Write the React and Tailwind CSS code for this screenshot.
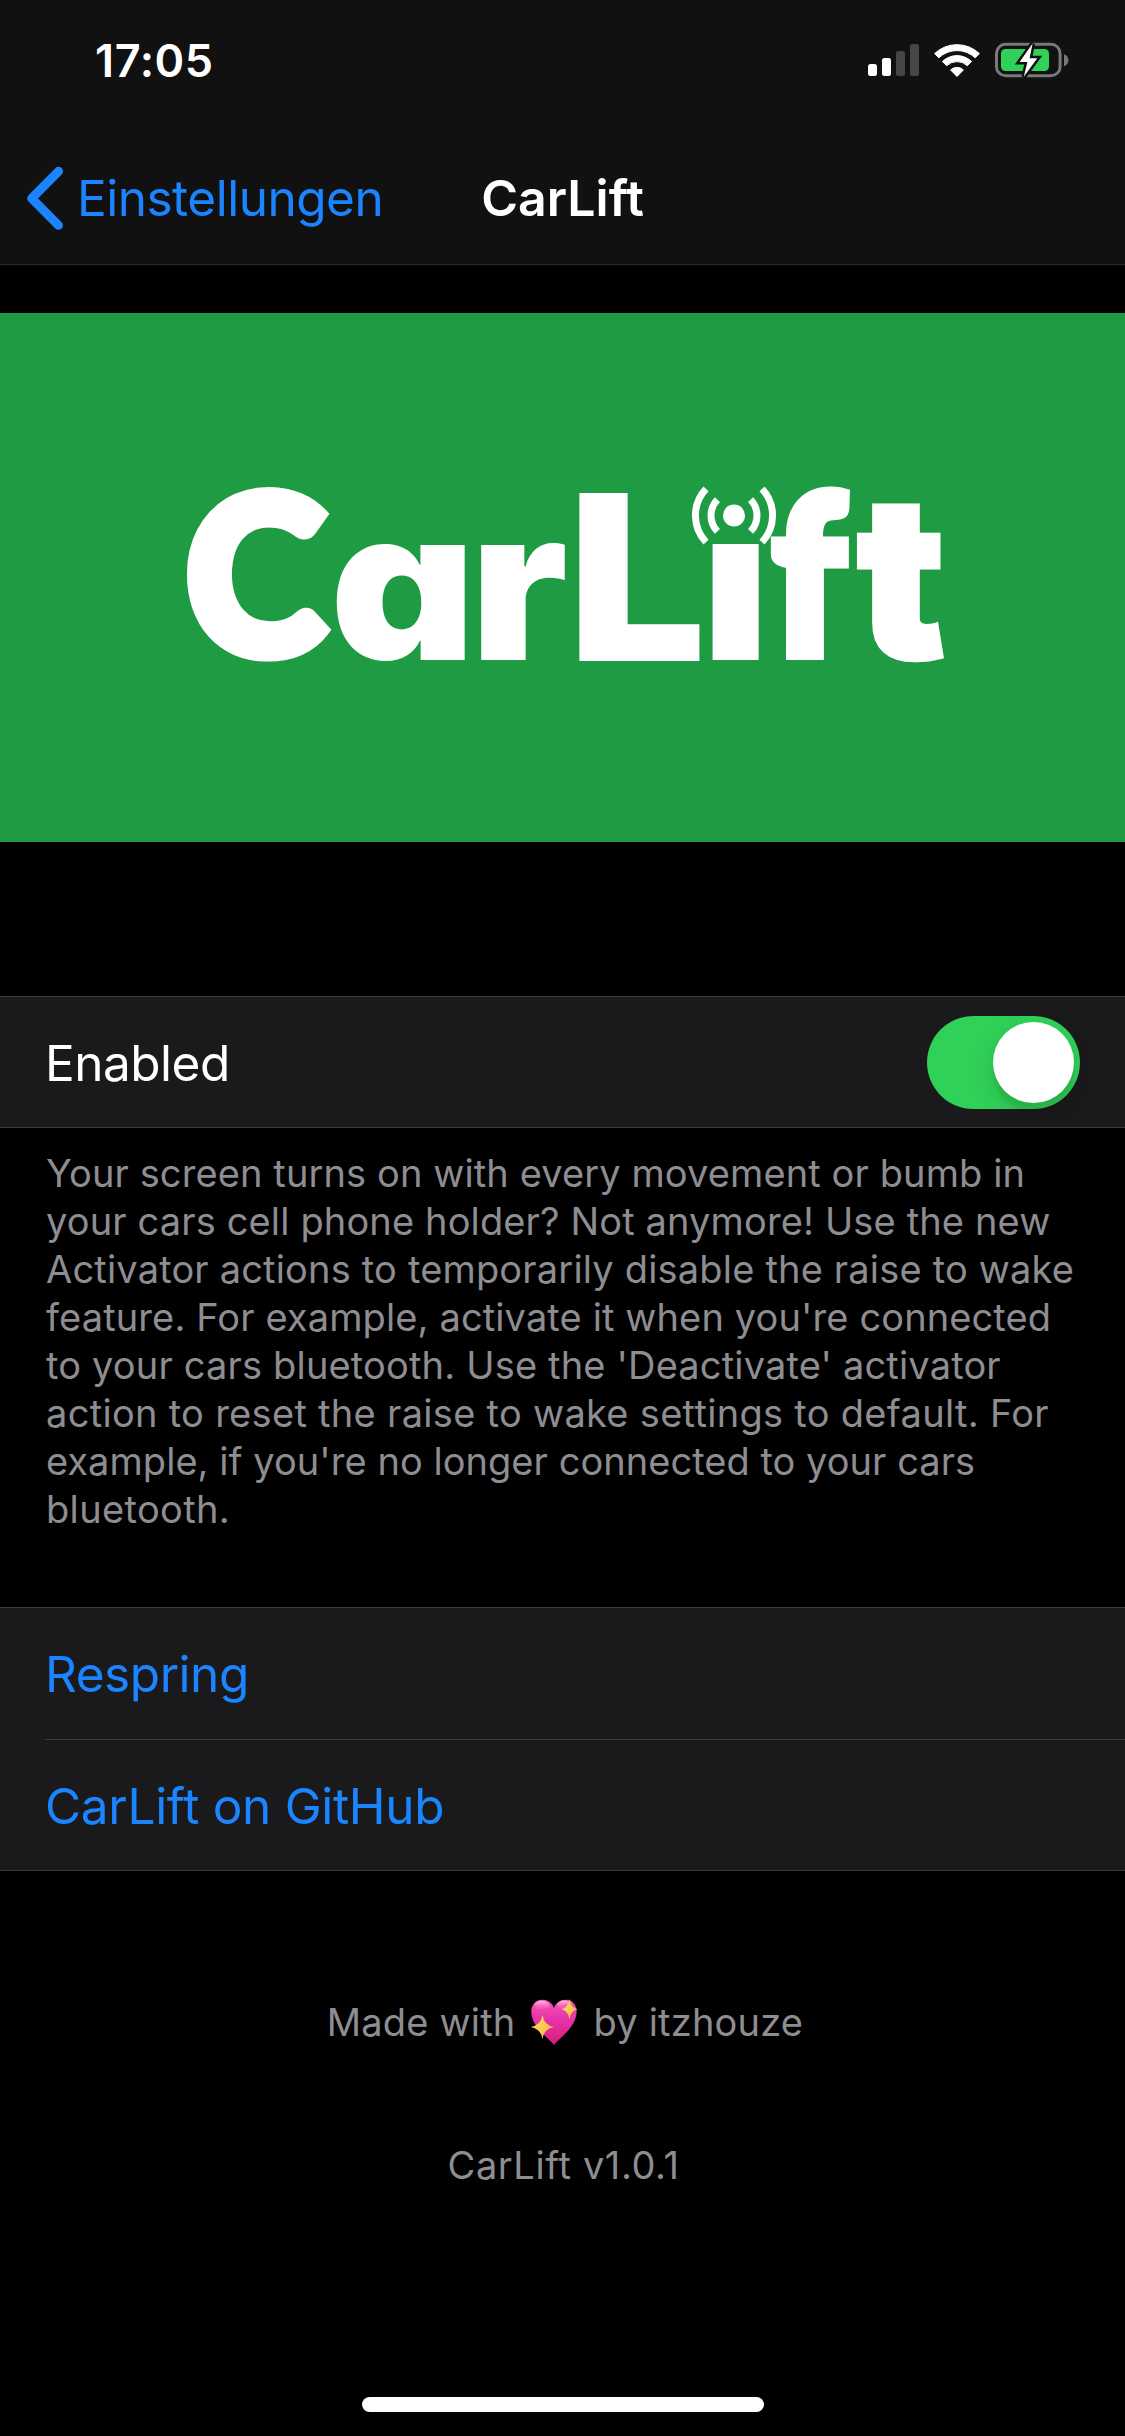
import React from "react";

function SignalIcon() {
  return (
    <svg width="51" height="32" viewBox="0 0 51 32">
      <rect x="0" y="20" width="9" height="12" rx="2.5" fill="#fff" />
      <rect x="14" y="14" width="9" height="18" rx="2.5" fill="#fff" />
      <rect x="28" y="7" width="9" height="25" rx="2.5" fill="#464647" />
      <rect x="42" y="0" width="9" height="32" rx="2.5" fill="#464647" />
    </svg>
  );
}

function WifiIcon() {
  return (
    <svg width="46" height="34" viewBox="-23 -33.5 46 34" fill="#fff" stroke="#fff" strokeWidth="1" strokeLinejoin="round">
      <path d="M-22.4 -22.9 A32.5 32.5 0 0 1 22.4 -22.9 L18.2 -18.7 A26.5 26.5 0 0 0 -18.2 -18.7 Z" />
      <path d="M-14.6 -15 A21 21 0 0 1 14.6 -15 L10.3 -10.8 A15 15 0 0 0 -10.3 -10.8 Z" />
      <path d="M-6.4 -6.6 A9.3 9.3 0 0 1 6.4 -6.6 L0 0 Z" />
    </svg>
  );
}

function BatteryIcon() {
  return (
    <svg width="74" height="36" viewBox="0 0 74 36">
      <rect x="1.5" y="2.3" width="63.6" height="31.4" rx="9" fill="none" stroke="#79797c" strokeWidth="3" />
      <path d="M69 12.2 C72.2 13.4 73.4 15.8 73.4 18.2 C73.4 20.6 72.2 23 69 24.2 Z" fill="#79797c" />
      <rect x="6" y="7" width="48" height="22" rx="4.5" fill="#30d158" />
      <path
        d="M37.6 1.6 L24.6 20 H32.4 L28.8 34.8 L42.3 16.3 H34.6 Z"
        fill="#fff"
        stroke="#111"
        strokeWidth="5"
        strokeLinejoin="miter"
        paintOrder="stroke"
      />
    </svg>
  );
}

function SparklingHeart() {
  return (
    <svg role="img" aria-label="💖" width="48" height="47" viewBox="0 0 48 47" className="shrink-0">
      <defs>
        <linearGradient id="heart" x1="0" y1="0" x2="0" y2="1">
          <stop offset="0" stopColor="#f654b4" />
          <stop offset="0.4" stopColor="#e834ac" />
          <stop offset="1" stopColor="#d81c78" />
        </linearGradient>
        <linearGradient id="spark" x1="0" y1="0" x2="1" y2="1">
          <stop offset="0" stopColor="#ffe873" />
          <stop offset="1" stopColor="#f7a935" />
        </linearGradient>
        <linearGradient id="shine" x1="0" y1="0" x2="0" y2="1">
          <stop offset="0" stopColor="#ffc4e6" stopOpacity="0.9" />
          <stop offset="1" stopColor="#ff7cc6" stopOpacity="0" />
        </linearGradient>
      </defs>
      <path
        d="M24 46 C20 40 1.3 28.5 1.3 12.5 C1.3 5.5 6 0.8 12.2 0.8 C18 0.8 22.2 4 24 9 C25.8 4 30 0.8 35.8 0.8 C42 0.8 46.6 5.5 46.6 12.5 C46.6 28.5 28 40 24 46 Z"
        fill="url(#heart)"
      />
      <ellipse cx="11.8" cy="6.6" rx="7.4" ry="4.8" fill="url(#shine)" />
      <ellipse cx="34" cy="6" rx="7" ry="4.4" fill="url(#shine)" />
      <path d="M12.5 16 Q13.8 26.2 24 28 Q13.8 29.8 12.5 40 Q11 29.8 0.6 28 Q11 26.2 12.5 16 Z" fill="url(#spark)" />
      <path d="M39.5 0 Q40.5 8.6 47.5 10.3 Q40.5 12 39.5 20.6 Q38.2 12 31.6 10.3 Q38.2 8.6 39.5 0 Z" fill="url(#spark)" />
    </svg>
  );
}

function Banner() {
  return (
    <svg
      viewBox="0 313 1125 529"
      className="block h-[529px] w-full bg-[#1f9b43] font-[Inter] text-[200px] font-black"
      fill="#fff"
      stroke="#fff"
      strokeLinejoin="miter"
    >
      <defs>
        <clipPath id="stem">
          <rect x="700" y="544" width="70" height="120" />
        </clipPath>
      </defs>
      <text className="font-[Lato]" strokeWidth="12" transform="translate(186 653.3) scale(1.053 1.089)">C</text>
      <text strokeWidth="0" style={{ fontFeatureSettings: '"cv11"' }} transform="translate(330 660) scale(1.13 1.05)">a</text>
      <text strokeWidth="0" transform="translate(470 660) scale(1.13 1.054)">r</text>
      <text strokeWidth="0" transform="translate(568 660.5) scale(1.22 1.155)">L</text>
      <g clipPath="url(#stem)">
        <text strokeWidth="0" transform="translate(701 660) scale(1.17 1.08)">i</text>
      </g>
      <text className="font-[Lato]" strokeWidth="10" transform="translate(772 654.5) scale(1.01 1.1)">f</text>
      <text strokeWidth="4" transform="translate(857 657.5) scale(1.1 1.128)">t</text>
      <circle cx="734" cy="515.5" r="11" stroke="none" />
      <g fill="none" strokeWidth="7" transform="translate(734 515.5)">
        <path d="M-16.6 -15.9 A23 23 0 0 0 -16.6 15.9" />
        <path d="M16.6 -15.9 A23 23 0 0 1 16.6 15.9" />
        <path d="M-28 -26.6 A38.8 38.8 0 0 0 -28 26.6" />
        <path d="M28 -26.6 A38.8 38.8 0 0 1 28 26.6" />
      </g>
    </svg>
  );
}

export default function App() {
  return (
    <div className="flex h-[2436px] w-[1125px] flex-col overflow-hidden bg-black font-[Inter,sans-serif] text-white">
      <header className="border-b border-[#29292a] bg-[#111]">
        <div className="flex h-[132px] items-start justify-between pr-[56px] pl-[95px]">
          <span className="mt-[31px] text-[45px] leading-[60px] font-semibold tracking-[0.6px]">17:05</span>
          <div className="mt-[42px] flex h-9 items-center">
            <SignalIcon />
            <div className="ml-[15px]"><WifiIcon /></div>
            <div className="ml-[15px]"><BatteryIcon /></div>
          </div>
        </div>
        <div className="grid h-[132px] grid-cols-3 items-center text-[49.5px] whitespace-nowrap">
          <div className="flex items-center text-[#1b84ff]">
            <svg width="38" height="64" viewBox="0 0 38 64" className="ml-[26px] shrink-0" fill="none" stroke="currentColor" strokeWidth="9" strokeLinecap="round" strokeLinejoin="round">
              <path d="M32.5 5.3 L5.7 32.3 L32.5 59.3" />
            </svg>
            <span className="ml-[13px] tracking-[-0.5px]">Einstellungen</span>
          </div>
          <h1 className="text-center text-[50px] font-semibold">CarLift</h1>
        </div>
      </header>

      <div className="mt-12"><Banner /></div>

      <section className="mt-[154px] flex h-[132px] items-center justify-between border-y border-[#3b3b3e] bg-[#1a1a1d] px-[45px]">
        <span className="pt-0.5 text-[49.5px] tracking-[-0.5px]">Enabled</span>
        <div className="flex h-[93px] w-[153px] items-center justify-end rounded-full bg-[#30d158] p-1.5">
          <div className="size-[81px] rounded-full bg-white shadow-[0_9px_24px_rgba(0,0,0,0.15),0_9px_3px_rgba(0,0,0,0.06)]" />
        </div>
      </section>

      <p className="mt-[21px] pl-[46px] text-[38px] leading-[48px] whitespace-nowrap text-[#8d8d92]">
        <span className="tracking-[0.11px]">Your screen turns on with every movement or bumb in</span><br />
        <span className="tracking-[0.14px]">your cars cell phone holder? Not anymore! Use the new</span><br />
        <span className="tracking-[0.18px]">Activator actions to temporarily disable the raise to wake</span><br />
        <span className="tracking-[0.12px]">feature. For example, activate it when you're connected</span><br />
        <span className="tracking-[0.17px]">to your cars bluetooth. Use the 'Deactivate' activator</span><br />
        <span className="tracking-[0.3px]">action to reset the raise to wake settings to default. For</span><br />
        <span className="tracking-[0.04px]">example, if you're no longer connected to your cars</span><br />
        <span className="tracking-[0.35px]">bluetooth.</span>
      </p>

      <section className="mt-[74px] border-y border-[#3b3b3e] bg-[#1a1a1d] pl-[45px] text-[49.5px] text-[#1b84ff]">
        <div className="flex h-[131px] items-center pt-0.5 tracking-[-0.45px]">Respring</div>
        <div className="flex h-[131px] items-center border-t border-[#3b3b3e] pt-0.5 tracking-[-0.3px]">CarLift on GitHub</div>
      </section>

      <footer className="mt-[127px] text-[38px] leading-[48px] text-[#8d8d92]">
        <div className="flex h-12 items-center justify-center pl-[5px] tracking-[0.2px]">
          <span>Made with</span>
          <div className="mr-4 ml-[14px]"><SparklingHeart /></div>
          <span>by itzhouze</span>
        </div>
        <div className="mt-[95px] pl-0.5 text-center tracking-[0.6px]">CarLift v1.0.1</div>
      </footer>

      <div className="mx-auto mt-auto mb-6 h-[15px] w-[402px] rounded-full bg-white" />
    </div>
  );
}
